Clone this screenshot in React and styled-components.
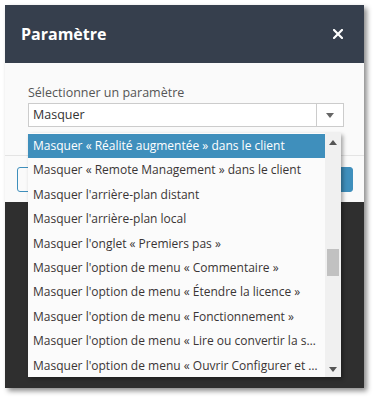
import React from "react";
import styled, { createGlobalStyle } from "styled-components";

const GlobalStyle = createGlobalStyle`
  body {
    margin: 0;
    background: #ffffff;
    font-family: "Open Sans", "Noto Sans", sans-serif;
  }
`;

const Page = styled.div`
  padding: 5px 0 0 5px;
  width: 375px;
  height: 398px;
  box-sizing: border-box;
`;

const Window = styled.div`
  width: 359px;
  height: 383px;
  display: flex;
  flex-direction: column;
  background: #2f2f2f;
  box-shadow: 3px 3px 5px rgba(0, 0, 0, 0.45);
`;

const Header = styled.div`
  height: 58px;
  flex: none;
  display: flex;
  align-items: center;
  justify-content: space-between;
  padding: 0 21px 0 16px;
  background: #363f4d;
`;

const Title = styled.h1`
  margin: 0;
  font-size: 16px;
  font-weight: 700;
  color: #ffffff;
`;

const CloseButton = styled.button`
  border: 0;
  padding: 0;
  background: none;
  display: flex;
  cursor: pointer;
`;

const Body = styled.div`
  position: relative;
  height: 139px;
  flex: none;
  background: #fafafa;
  display: flex;
  flex-direction: column;
`;

const Field = styled.div`
  padding: 21px 20px 0 23px;
  height: 92px;
  box-sizing: border-box;
`;

const Label = styled.div`
  font-size: 12.5px;
  color: #555555;
  line-height: 17px;
  margin-bottom: 2px;
`;

const Select = styled.div`
  height: 24px;
  display: flex;
  border: 1px solid #cccccc;
  background: #ffffff;
  box-sizing: border-box;
`;

const SelectValue = styled.div`
  flex: 1;
  padding-left: 4px;
  font-size: 12.5px;
  line-height: 22px;
  color: #333333;
`;

const SelectArrow = styled.div`
  width: 26px;
  border-left: 1px solid #cccccc;
  display: flex;
  align-items: center;
  justify-content: center;
`;

const Divider = styled.div`
  height: 1px;
  background: #e4e4e4;
`;

const Footer = styled.div`
  display: flex;
  justify-content: space-between;
  padding: 11px 11px 0 12px;
`;

const Button = styled.button`
  height: 25px;
  width: 80px;
  border-radius: 3px;
  border: 1px solid #3f8fbc;
  background: ${(p) => (p.$primary ? "#3f8fbc" : "#fafafa")};
`;

const List = styled.div`
  position: absolute;
  top: 70px;
  left: 23px;
  width: 313px;
  height: 244px;
  display: flex;
  background: #fbfbfb;
  box-shadow: 2px 2px 4px rgba(0, 0, 0, 0.35);
`;

const Options = styled.div`
  flex: 1;
  min-width: 0;
  padding-top: 1px;
`;

const Option = styled.div`
  height: 24.4px;
  line-height: 24.4px;
  padding: 0 6px 0 5px;
  font-size: 12px;
  white-space: nowrap;
  overflow: hidden;
  text-overflow: ellipsis;
  color: ${(p) => (p.$active ? "#ffffff" : "#3a3535")};
  background: ${(p) => (p.$active ? "#3f8fbc" : "transparent")};
`;

const Scrollbar = styled.div`
  width: 16px;
  flex: none;
  background: #f0f0f0;
  display: flex;
  flex-direction: column;
  align-items: center;
  padding: 7px 0 5px;
  box-sizing: border-box;
`;

const Thumb = styled.div`
  width: 12px;
  height: 27px;
  margin-top: 104px;
  background: #c1c1c1;
`;

const Spacer = styled.div`
  flex: 1;
`;

const Triangle = ({ up, color = "#555" }) => (
  <svg width="8" height="5" viewBox="0 0 8 5">
    <path d={up ? "M0 5 L4 0 L8 5 Z" : "M0 0 L8 0 L4 5 Z"} fill={color} />
  </svg>
);

const options = [
  "Masquer « Réalité augmentée » dans le client",
  "Masquer « Remote Management » dans le client",
  "Masquer l'arrière-plan distant",
  "Masquer l'arrière-plan local",
  "Masquer l'onglet « Premiers pas »",
  "Masquer l'option de menu « Commentaire »",
  "Masquer l'option de menu « Étendre la licence »",
  "Masquer l'option de menu « Fonctionnement »",
  "Masquer l'option de menu « Lire ou convertir la session enregistrée »",
  "Masquer l'option de menu « Ouvrir Configurer et gérer »",
];

export default function App() {
  return (
    <Page>
      <GlobalStyle />
      <Window>
        <Header>
          <Title>Paramètre</Title>
          <CloseButton aria-label="Fermer">
            <svg width="10" height="10" viewBox="0 0 10 10">
              <path
                d="M1 1 L9 9 M9 1 L1 9"
                stroke="#ffffff"
                strokeWidth="2.2"
                strokeLinecap="square"
              />
            </svg>
          </CloseButton>
        </Header>
        <Body>
          <Field>
            <Label>Sélectionner un paramètre</Label>
            <Select>
              <SelectValue>Masquer</SelectValue>
              <SelectArrow>
                <Triangle color="#666" />
              </SelectArrow>
            </Select>
          </Field>
          <Divider />
          <Footer>
            <Button />
            <Button $primary />
          </Footer>
          <List>
            <Options>
              {options.map((o, i) => (
                <Option key={o} $active={i === 0}>
                  {o}
                </Option>
              ))}
            </Options>
            <Scrollbar>
              <Triangle up />
              <Thumb />
              <Spacer />
              <Triangle />
            </Scrollbar>
          </List>
        </Body>
      </Window>
    </Page>
  );
}
